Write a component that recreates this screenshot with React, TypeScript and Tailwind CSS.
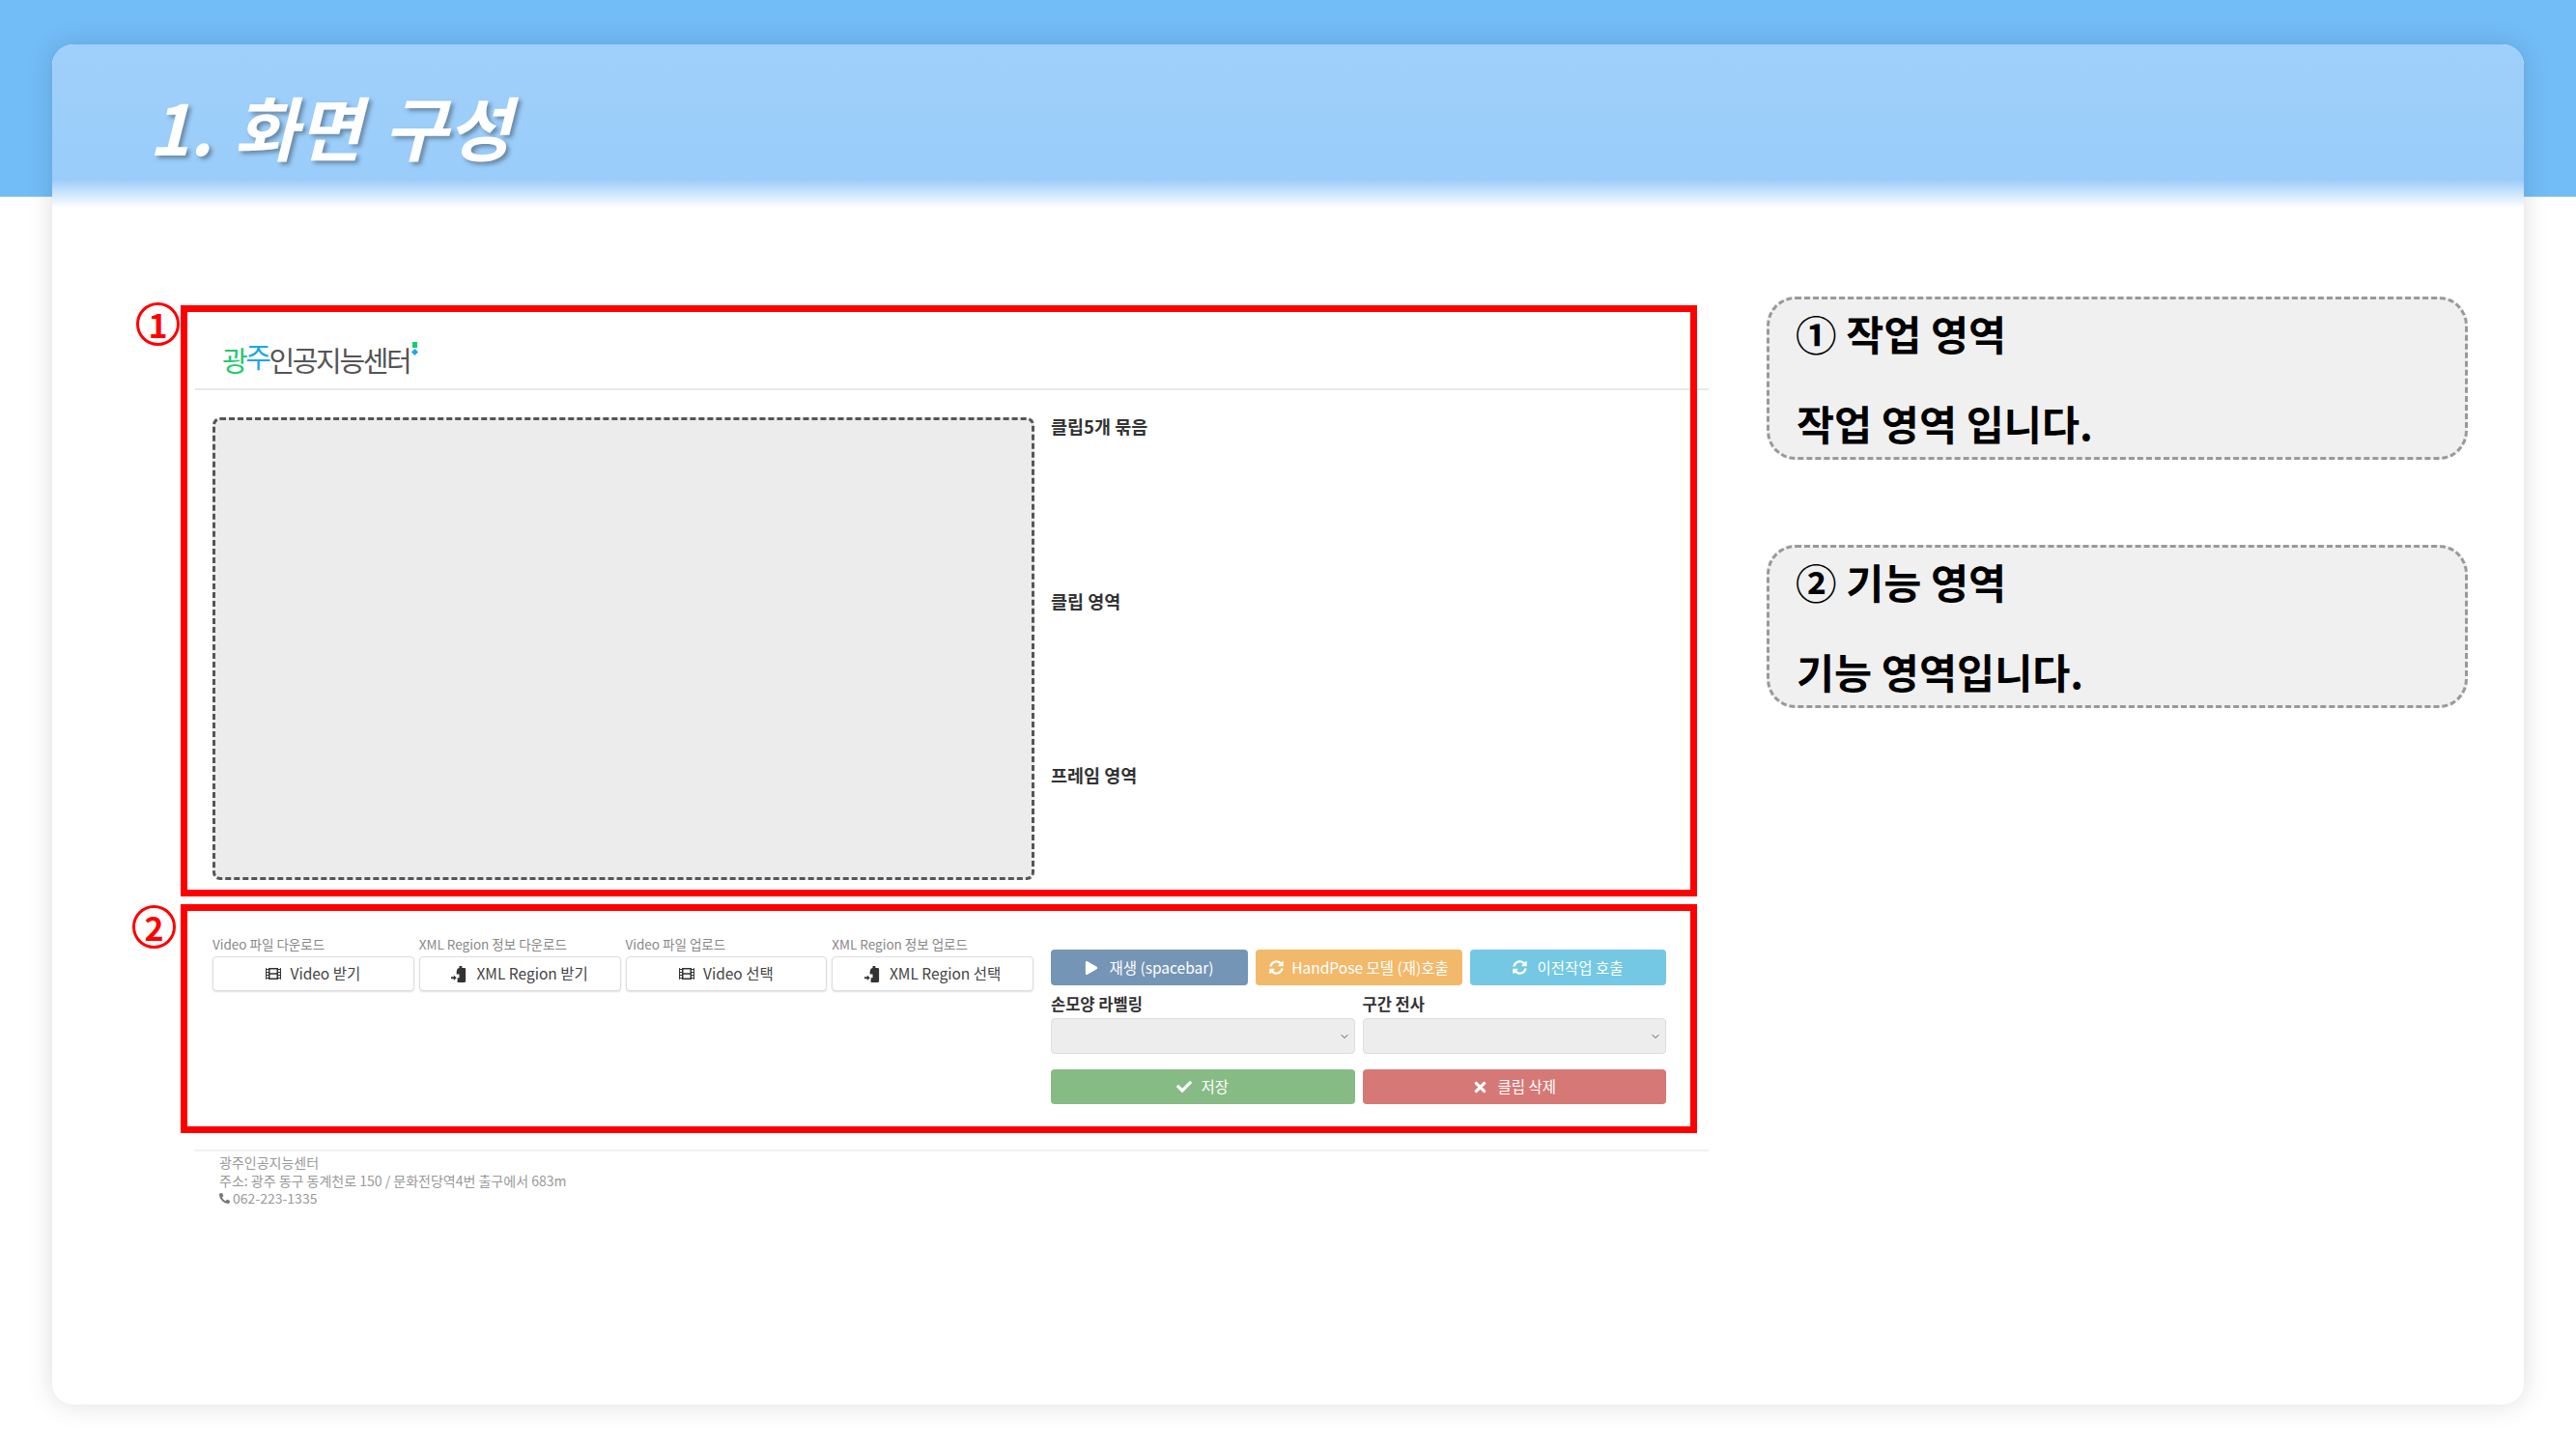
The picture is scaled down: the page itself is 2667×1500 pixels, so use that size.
import { FaCheck, FaFilm, FaPhoneAlt, FaPlay, FaSyncAlt, FaTimes } from 'react-icons/fa';
import { ChevronDown } from 'lucide-react';

const KR = "font-['Noto_Sans_CJK_KR','Noto_Sans',sans-serif]";

function DoorIcon() {
  // clipboard-with-arrow glyph on the XML Region buttons
  return (
    <svg viewBox="0 0 18 18" className="w-[17px] h-[17px] fill-[#333]">
      <path d="M9 0h3v2h3l1 1v14l-1 1H7v-5h2V9H6V6l1-3 2-1zM0 12h3v-2l3 3-3 3v-2H0z" />
    </svg>
  );
}

function DownloadCol({ label, text, icon }: { label: string; text: string; icon: React.ReactNode }) {
  return (
    <div>
      <div className="h-[18px] mb-[4px] text-[13.5px] leading-[18px] text-[#888] whitespace-nowrap">{label}</div>
      <button className="w-full h-[36px] flex items-center justify-center gap-[9px] bg-white border border-[#ddd] rounded-[4px] shadow-[0_1px_2px_rgba(0,0,0,0.12)] text-[15.5px] text-[#444]">
        {icon}
        <span>{text}</span>
      </button>
    </div>
  );
}

function SideNote({ title, body, num }: { title: string; body: string; num: string }) {
  return (
    <div className="h-[169px] border-[3px] border-dashed border-[#999] rounded-[30px] bg-[#f0f0f0] pl-[28px] font-bold text-black">
      <div className="h-[63px] pt-[9px] -ml-[1px] text-[42.5px] leading-[52px] whitespace-nowrap">
        {num} {title}
      </div>
      <div className="mt-[39px] text-[42.5px] leading-[52px] whitespace-nowrap">{body}</div>
    </div>
  );
}

export default function App() {
  return (
    <div className={`relative w-[2667px] h-[1500px] bg-white overflow-hidden pt-[46px] px-[54px] ${KR}`}>
      <div className="absolute left-0 top-0 w-full h-[204px] bg-[#72bcf7] border-b border-[#9ccffb]" />

      <div className="relative isolate h-[1408px] bg-white rounded-[22px] shadow-[0_0_28px_rgba(0,0,0,0.13)]">
        {/* 제목 */}
        <div className="h-[169px] rounded-t-[22px] bg-[linear-gradient(to_bottom,#9fd0fb_0px,#9bcdfa_140px,#ffffff_169px)] pl-[100px] pt-[44px]">
          <h1 className="text-[72px] leading-[80px] font-bold italic text-white tracking-[0px] [word-spacing:6px] [text-shadow:3px_3px_4px_rgba(60,80,100,0.55)]">
            1. 화면 구성
          </h1>
        </div>

        <div className="flex items-start pl-[133px]">
          <div className="relative w-[1570px] pt-[101px]">
            {/* ① 작업 영역 */}
            <div className="relative h-[612px] border-[7px] border-[#ff0000]">
              <div className="absolute -left-[53px] -top-[10px] w-[45px] h-[45px] rounded-full border-[3px] border-[#ff0000] bg-white flex items-center justify-center text-[34px] leading-none font-bold text-[#ff0000]">
                1
              </div>
              <div className="relative -z-10 ml-[8px] -mr-[19px] h-[81px] border-b-2 border-[#e8e8e8] flex items-center pl-[28px] pt-[20px] text-[29px] tracking-[-2.4px] text-[#555]">
                <span className="text-[#22c96e]">광</span>
                <span className="text-[#1aa7e8] -mt-[8px]">주</span>
                <span>인공지능센터</span>
                <span className="flex flex-col gap-[2px] ml-[3px] -mt-[24px]">
                  <span className="block w-[5px] h-[6px] bg-[#0fcf6a]" />
                  <span className="block w-[5px] h-[5px] rotate-45 bg-[#1aa7e8]" />
                </span>
              </div>
              <div className="flex pl-[26px] pt-[28px]">
                <div className="w-[851px] h-[479px] border-[3px] border-dashed border-[#555] rounded-[8px] bg-[#ececec]" />
                <div className="ml-[17px] -mt-[1px] text-[18.5px] leading-[20px] font-bold text-[#333]">
                  <div className="h-[181px]">클립5개 묶음</div>
                  <div className="h-[180px]">클립 영역</div>
                  <div>프레임 영역</div>
                </div>
              </div>
            </div>

            {/* ② 기능 영역 */}
            <div className="relative mt-[8px] h-[237px] border-[7px] border-[#ff0000] flex items-start">
              <div className="absolute -left-[57px] -top-[6px] w-[45px] h-[45px] rounded-full border-[3px] border-[#ff0000] bg-white flex items-center justify-center text-[34px] leading-none font-bold text-[#ff0000]">
                2
              </div>
              <div className="ml-[26px] mt-[25px] w-[850px] grid grid-cols-4 gap-[5px]">
                <DownloadCol label="Video 파일 다운로드" text="Video 받기" icon={<FaFilm className="text-[#333] text-[16px]" />} />
                <DownloadCol label="XML Region 정보 다운로드" text="XML Region 받기" icon={<DoorIcon />} />
                <DownloadCol label="Video 파일 업로드" text="Video 선택" icon={<FaFilm className="text-[#333] text-[16px]" />} />
                <DownloadCol label="XML Region 정보 업로드" text="XML Region 선택" icon={<DoorIcon />} />
              </div>
              <div className="ml-[18px] mt-[40px] w-[637px]">
                <div className="flex gap-[8px] text-[15.5px] text-white">
                  <button className="w-[204px] h-[37px] rounded-[4px] bg-[#7495b5] flex items-center justify-center gap-[11px]">
                    <FaPlay className="text-[14px]" />
                    <span>재생 (spacebar)</span>
                  </button>
                  <button className="w-[214px] h-[37px] rounded-[4px] bg-[#f2b96b] flex items-center justify-center gap-[8px]">
                    <FaSyncAlt className="text-[15px]" />
                    <span>HandPose 모델 (재)호출</span>
                  </button>
                  <button className="w-[203px] h-[37px] rounded-[4px] bg-[#74c8e4] flex items-center justify-center gap-[10px]">
                    <FaSyncAlt className="text-[15px]" />
                    <span>이전작업 호출</span>
                  </button>
                </div>
                <div className="grid grid-cols-2 gap-x-[8px] mt-[9px]">
                  <div>
                    <div className="h-[25px] text-[16.5px] leading-[20px] font-bold text-[#333]">손모양 라벨링</div>
                    <div className="h-[37px] flex items-center justify-end pr-[4px] bg-[#ededed] border border-[#ddd] rounded-[4px]">
                      <ChevronDown className="w-[12px] h-[12px] text-[#555]" />
                    </div>
                  </div>
                  <div>
                    <div className="h-[25px] text-[16.5px] leading-[20px] font-bold text-[#333]">구간 전사</div>
                    <div className="h-[37px] flex items-center justify-end pr-[4px] bg-[#ededed] border border-[#ddd] rounded-[4px]">
                      <ChevronDown className="w-[12px] h-[12px] text-[#555]" />
                    </div>
                  </div>
                  <button className="mt-[16px] h-[36px] rounded-[4px] bg-[#86bb85] flex items-center justify-center gap-[9px] text-[15.5px] text-white">
                    <FaCheck className="text-[16px]" />
                    <span>저장</span>
                  </button>
                  <button className="mt-[16px] h-[36px] rounded-[4px] bg-[#d67875] flex items-center justify-center gap-[9px] text-[15.5px] text-white">
                    <FaTimes className="text-[17px]" />
                    <span>클립 삭제</span>
                  </button>
                </div>
              </div>
            </div>

            {/* 하단 정보 */}
            <div className="ml-[14px] -mr-[12px] mt-[17px] border-t-2 border-[#f0f0f0] pl-[26px] pt-[2px] text-[14px] leading-[18.5px] text-[#999]">
              <div>광주인공지능센터</div>
              <div>주소: 광주 동구 동계천로 150 / 문화전당역4번 출구에서 683m</div>
              <div className="flex items-center gap-[3px]">
                <FaPhoneAlt className="text-[11px] text-[#777]" />
                <span>062-223-1335</span>
              </div>
            </div>
          </div>

          <div className="ml-[72px] w-[726px] pt-[92px]">
            <SideNote num="①" title="작업 영역" body="작업 영역 입니다." />
            <div className="mt-[88px]">
              <SideNote num="②" title="기능 영역" body="기능 영역입니다." />
            </div>
          </div>
        </div>
      </div>
    </div>
  );
}
